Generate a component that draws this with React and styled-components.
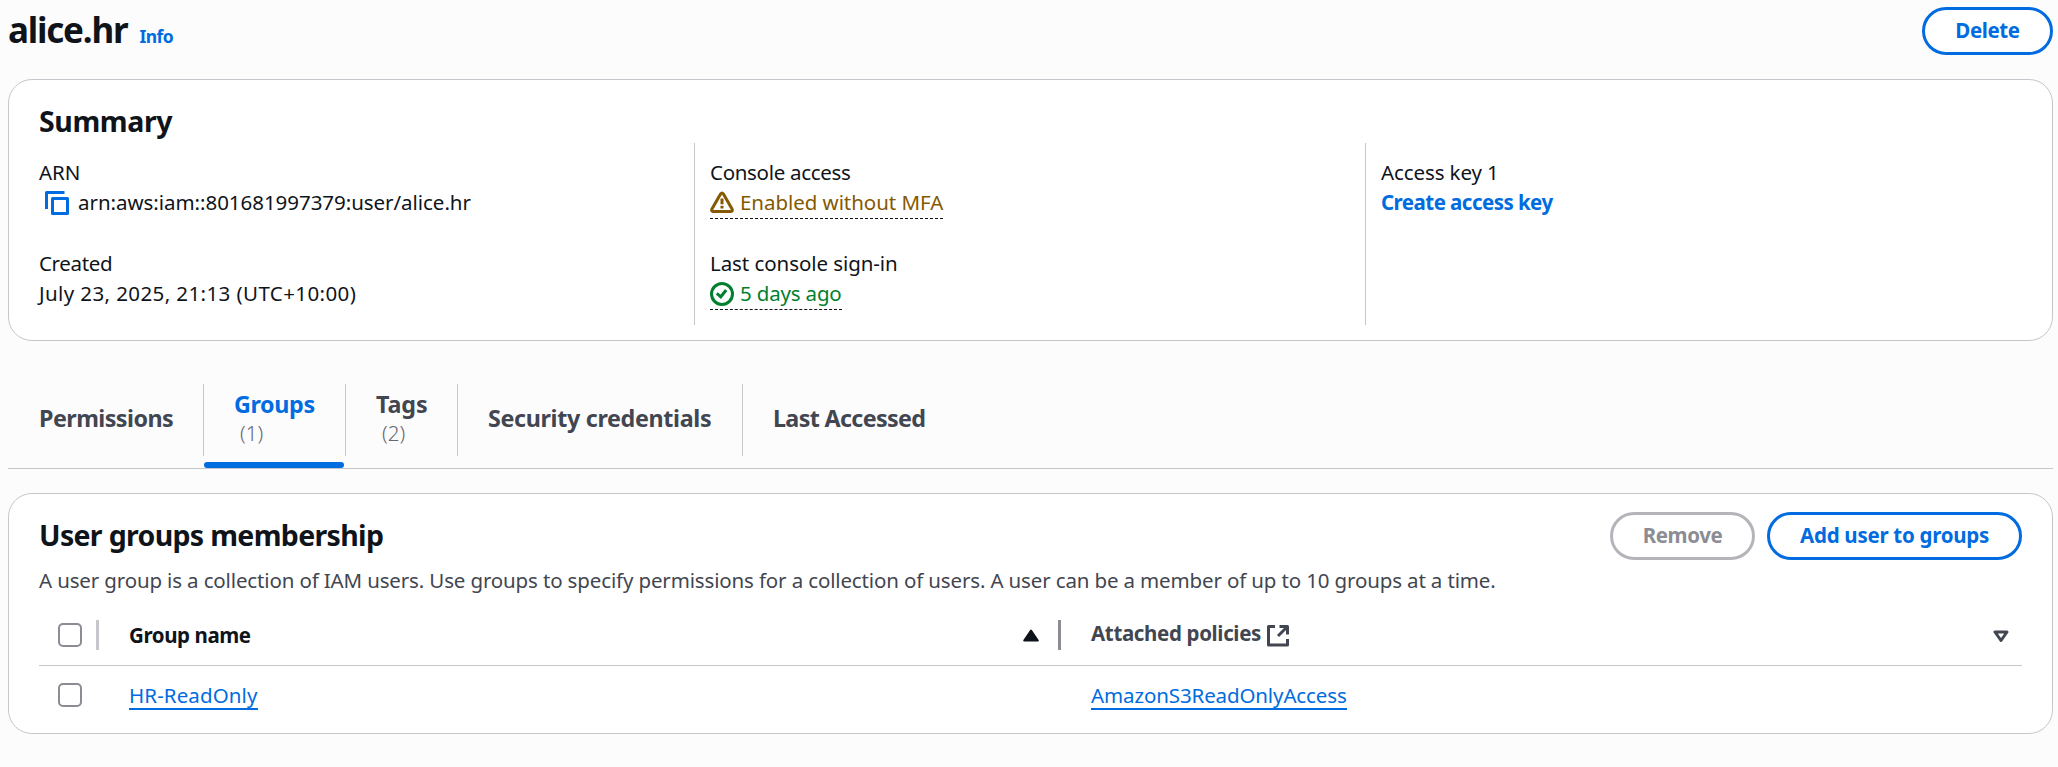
import React from 'react';
import styled, { createGlobalStyle } from 'styled-components';

const blue = '#006ce0';
const ink = '#0f141a';
const slate = '#424650';
const line = '#c6c6cd';

const Global = createGlobalStyle`
  *, *::before, *::after { box-sizing: border-box; }
  body {
    margin: 0;
    background: #fcfcfd;
    color: ${ink};
    font: 400 20.5px/30px "Noto Sans", sans-serif;
  }
  h1, h2, p { margin: 0; }
  button { font-family: inherit; }
  svg { display: block; flex: none; }
`;

const Label = styled.span`
  white-space: nowrap;
  letter-spacing: ${(p) => p.$track || 0}px;
`;

const Page = styled.main`
  width: 2045px;
  margin-left: 8px;
  padding-top: 7px;
`;

const PageHeader = styled.header`
  display: flex;
  justify-content: space-between;
  height: 72px;
`;

const TitleGroup = styled.div`
  display: flex;
  align-items: baseline;
  gap: 12px;
  height: 48px;
`;

const Title = styled.h1`
  font-size: 35px;
  line-height: 45px;
  font-weight: 700;
`;

const InfoLink = styled.a`
  color: ${blue};
  font-size: 17.5px;
  font-weight: 700;
`;

const Button = styled.button`
  display: flex;
  align-items: center;
  justify-content: center;
  width: ${(p) => p.$width}px;
  height: 48px;
  padding: 0 0 2px;
  border: 3px solid ${(p) => (p.disabled ? '#b4b4bb' : blue)};
  border-radius: 24px;
  background: #fff;
  color: ${(p) => (p.disabled ? '#8c8c94' : blue)};
  font-size: 20.5px;
  line-height: 30px;
  font-weight: 700;
`;

const Card = styled.section`
  height: ${(p) => p.$height}px;
  margin-top: ${(p) => p.$gap || 0}px;
  padding: ${(p) => p.$top}px 30px 0;
  border: 1px solid ${line};
  border-radius: 24px;
  background: #fff;
`;

const CardTitle = styled.h2`
  font-size: 28.5px;
  line-height: 36px;
  font-weight: 700;
`;

const SummaryGrid = styled.div`
  display: grid;
  grid-template-columns: 655px 671px 1fr;
  height: 182px;
  margin-top: 4px;
`;

const SummaryColumn = styled.div`
  display: flex;
  flex-direction: column;
  gap: 31px;
  padding-top: 14px;
  padding-left: ${(p) => (p.$divided ? 15 : 0)}px;
  border-left: ${(p) => (p.$divided ? `1px solid ${line}` : 'none')};
`;

const Field = styled.div`
  display: flex;
  flex-direction: column;
  align-items: flex-start;
`;

const CopyValue = styled.div`
  display: flex;
  align-items: center;
  gap: 9px;
  padding-left: 6px;
  svg { margin-top: 2px; }
`;

const Status = styled.div`
  display: flex;
  align-items: center;
  gap: 6px;
  height: 32px;
  margin-bottom: -2px;
  padding-bottom: 1px;
  border-bottom: 1px dashed ${ink};
  color: ${(p) => p.$color};
  svg { margin-top: 2px; }
`;

const TextButton = styled.a`
  color: ${blue};
  font-weight: 700;
`;

const Tabs = styled.nav`
  display: flex;
  height: 86px;
  margin-top: 42px;
  border-bottom: 1px solid ${line};
`;

const Tab = styled.div`
  display: flex;
  flex-direction: column;
  justify-content: space-between;
  width: ${(p) => p.$width}px;
  color: ${(p) => (p.$active ? blue : slate)};
`;

const TabBody = styled.div`
  display: flex;
  flex-direction: column;
  justify-content: center;
  height: 72px;
  margin-top: 1px;
  padding: 0 0 4px ${(p) => (p.$first ? 31 : 30)}px;
  border-right: ${(p) => (p.$last ? 'none' : `1px solid ${line}`)};
  font-size: 23.3px;
  line-height: 30px;
  font-weight: 700;
`;

const TabCount = styled.span`
  padding-left: 6px;
  color: #656871;
  font-size: 20.5px;
  line-height: 29px;
  font-weight: 300;
`;

const TabMarker = styled.div`
  width: 140px;
  height: 6px;
  border-radius: 3px;
  background: ${blue};
`;

const MembershipHeader = styled.div`
  display: flex;
  justify-content: space-between;
  height: 53px;
  ${CardTitle} { padding-top: 5px; }
`;

const Actions = styled.div`
  display: flex;
  gap: 12px;
`;

const Description = styled.p`
  color: ${slate};
`;

const Table = styled.div`
  display: flex;
  flex-direction: column;
  margin-top: 11px;
`;

const Row = styled.div`
  display: grid;
  grid-template-columns: 60px 962px 1fr;
  height: ${(p) => (p.$head ? 60 : 58)}px;
  padding-bottom: ${(p) => (p.$head ? 1 : 0)}px;
  border-bottom: ${(p) => (p.$head ? `1px solid ${line}` : 'none')};
`;

const SelectCell = styled.div`
  display: flex;
  align-items: center;
  justify-content: space-between;
  padding-left: 19px;
`;

const Cell = styled.div`
  display: flex;
  align-items: center;
  justify-content: space-between;
  padding-left: 30px;
  padding-right: ${(p) => p.$end || 0}px;
`;

const ColumnName = styled.div`
  display: flex;
  align-items: center;
  gap: 6px;
  padding-bottom: ${(p) => p.$raise || 0}px;
  color: ${(p) => p.$color};
  font-weight: 700;
`;

const IconDrop = styled.span`
  padding-top: 6px;
`;

const SortGroup = styled.div`
  display: flex;
  align-items: center;
  gap: 19px;
`;

const SortSlot = styled.span`
  padding-top: ${(p) => p.$drop}px;
`;

const Separator = styled.span`
  width: 3px;
  height: 30px;
  background: ${(p) => p.$color};
`;

const Checkbox = styled.span`
  width: 24px;
  height: 24px;
  border: 2px solid #8c8c94;
  border-radius: 5px;
  background: #fff;
`;

const TableLink = styled.a`
  height: 30px;
  border-bottom: 2px solid ${blue};
  color: ${blue};
  line-height: 30px;
`;

const CopyIcon = () => (
  <svg width="24" height="24" viewBox="0 0 24 24" fill="none" stroke={blue} strokeWidth="3">
    <path d="M1.5 18V1.5H19.5" strokeLinejoin="round" />
    <rect x="7.5" y="7.5" width="15" height="15" strokeLinejoin="round" />
  </svg>
);

const WarningIcon = () => (
  <svg width="24" height="24" viewBox="0 0 24 24" fill="none" stroke="#855900" strokeWidth="3">
    <path d="M10.7 2.8Q12 1 13.3 2.8L22.2 18.3Q22.8 20.4 21 20.5H3Q1.2 20.4 1.8 18.3Z" strokeLinejoin="round" />
    <path d="M12 7.5V13.3M12 14.8V17.6" />
  </svg>
);

const CheckIcon = () => (
  <svg width="24" height="24" viewBox="0 0 24 24" fill="none" stroke="#00802f" strokeWidth="3">
    <circle cx="12" cy="12" r="10.5" />
    <path d="M6.8 11.3 10.8 14.8 16.2 8" />
  </svg>
);

const ExternalIcon = () => (
  <svg width="22" height="22" viewBox="0 0 22 22" fill="none" stroke={slate} strokeWidth="3">
    <path d="M8 1.5H1.5V20H20.5V14M12.5 1.5H20.5V9.5M20 2 11 11" strokeLinejoin="round" />
  </svg>
);

const SortUpIcon = () => (
  <svg width="16" height="13" viewBox="0 0 16 13" fill={ink} stroke={ink} strokeWidth="2">
    <path d="M8 1.5 14.8 11.5H1.2Z" strokeLinejoin="round" />
  </svg>
);

const SortDownIcon = () => (
  <svg width="16" height="13" viewBox="0 0 16 13" fill="none" stroke={slate} strokeWidth="3">
    <path d="M2 2H14L8 10.5Z" strokeLinejoin="round" />
  </svg>
);

const tabs = [
  { name: 'Permissions', width: 196, track: -0.55, first: true },
  { name: 'Groups', width: 142, track: -0.35, count: '(1)', active: true },
  { name: 'Tags', width: 112, track: -0.1, count: '(2)' },
  { name: 'Security credentials', width: 285, track: -0.34 },
  { name: 'Last Accessed', width: 220, track: -0.66, last: true },
];

export default function App() {
  return (
    <Page>
      <Global />
      <PageHeader>
        <TitleGroup>
          <Title><Label $track={-1.2}>alice.hr</Label></Title>
          <InfoLink><Label $track={-0.55}>Info</Label></InfoLink>
        </TitleGroup>
        <Button $width={131}><Label $track={-0.4}>Delete</Label></Button>
      </PageHeader>

      <Card $height={262} $top={23}>
        <CardTitle><Label $track={-0.4}>Summary</Label></CardTitle>
        <SummaryGrid>
          <SummaryColumn>
            <Field>
              <Label>ARN</Label>
              <CopyValue>
                <CopyIcon />
                <Label $track={-0.04}>arn:aws:iam::801681997379:user/alice.hr</Label>
              </CopyValue>
            </Field>
            <Field>
              <Label $track={-0.35}>Created</Label>
              <Label $track={0.4}>July 23, 2025, 21:13 (UTC+10:00)</Label>
            </Field>
          </SummaryColumn>
          <SummaryColumn $divided>
            <Field>
              <Label $track={-0.31}>Console access</Label>
              <Status $color="#855900"><WarningIcon /><Label $track={-0.05}>Enabled without MFA</Label></Status>
            </Field>
            <Field>
              <Label $track={-0.07}>Last console sign-in</Label>
              <Status $color="#00802f"><CheckIcon /><Label $track={-0.17}>5 days ago</Label></Status>
            </Field>
          </SummaryColumn>
          <SummaryColumn $divided>
            <Field>
              <Label $track={-0.1}>Access key 1</Label>
              <TextButton><Label $track={-0.54}>Create access key</Label></TextButton>
            </Field>
          </SummaryColumn>
        </SummaryGrid>
      </Card>

      <Tabs>
        {tabs.map((t) => (
          <Tab key={t.name} $width={t.width} $active={t.active}>
            <TabBody $first={t.first} $last={t.last}>
              <Label $track={t.track}>{t.name}</Label>
              {t.count && <TabCount>{t.count}</TabCount>}
            </TabBody>
            {t.active && <TabMarker />}
          </Tab>
        ))}
      </Tabs>

      <Card $height={241} $gap={24} $top={18}>
        <MembershipHeader>
          <CardTitle><Label $track={-0.67}>User groups membership</Label></CardTitle>
          <Actions>
            <Button $width={145} disabled><Label $track={-0.4}>Remove</Label></Button>
            <Button $width={255}><Label $track={-0.28}>Add user to groups</Label></Button>
          </Actions>
        </MembershipHeader>
        <Description>
          <Label $track={-0.143}>A user group is a collection of IAM users. Use groups to specify permissions for a collection of users. A user can be a member of up to 10 groups at a time.</Label>
        </Description>
        <Table>
          <Row $head>
            <SelectCell><Checkbox /><Separator $color={line} /></SelectCell>
            <Cell>
              <ColumnName $color={ink}><Label $track={-0.42}>Group name</Label></ColumnName>
              <SortGroup><SortSlot $drop={1}><SortUpIcon /></SortSlot><Separator $color="#8c8c94" /></SortGroup>
            </Cell>
            <Cell $end={13}>
              <ColumnName $color={slate} $raise={4}>
                <Label $track={-0.35}>Attached policies</Label>
                <IconDrop><ExternalIcon /></IconDrop>
              </ColumnName>
              <SortSlot $drop={2}><SortDownIcon /></SortSlot>
            </Cell>
          </Row>
          <Row>
            <SelectCell><Checkbox /></SelectCell>
            <Cell><TableLink><Label $track={0.1}>HR-ReadOnly</Label></TableLink></Cell>
            <Cell><TableLink><Label $track={-0.12}>AmazonS3ReadOnlyAccess</Label></TableLink></Cell>
          </Row>
        </Table>
      </Card>
    </Page>
  );
}
